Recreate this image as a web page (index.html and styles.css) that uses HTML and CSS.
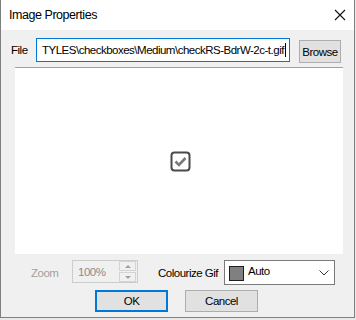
FILE: index.html
```html
<!DOCTYPE html>
<html>
<head>
    <meta name="viewport" content="width=device-width, initial-scale=1.0">
    <title>Image Properties</title>
    <link rel="stylesheet" href="styles.css">
</head>
<body>
<div class="window">
    <div class="titlebar">
        <span class="title">Image Properties</span>
        <svg class="close" width="12" height="12" viewBox="0 0 12 12">
            <path d="M1 1 L11 11 M11 1 L1 11" stroke="#111" stroke-width="1.1" fill="none"/>
        </svg>
    </div>
    <div class="content">
        <div class="file-row">
            <span class="label">File</span>
            <div class="textbox">TYLES\checkboxes\Medium\checkRS-BdrW-2c-t.gif<span class="caret"></span></div>
            <div class="button browse">Browse</div>
        </div>

        <div class="preview">
            <svg width="21" height="21" viewBox="0 0 21 21">
                <rect x="1.5" y="1.5" width="18" height="18" rx="3" ry="3" fill="#fff" stroke="#4a4a4a" stroke-width="2"/>
                <path d="M5.5 10.5 L9 14 L15.5 7" stroke="#7a7a7a" stroke-width="2.6" fill="none"/>
            </svg>
        </div>

        <div class="options-row">
            <span class="label disabled zoom-label">Zoom</span>
            <div class="spinbox">
                <span class="spin-value">100%</span>
                <div class="spin-buttons">
                    <div class="spin-btn"><span class="arrow up"></span></div>
                    <div class="spin-btn"><span class="arrow down"></span></div>
                </div>
            </div>
            <span class="label colourize-label">Colourize Gif</span>
            <div class="dropdown">
                <span class="swatch"></span>
                <span class="dropdown-text">Auto</span>
                <svg class="chevron" width="10" height="6" viewBox="0 0 10 6">
                    <path d="M0.5 0.5 L5 5 L9.5 0.5" stroke="#333" stroke-width="1" fill="none"/>
                </svg>
            </div>
        </div>

        <div class="actions">
            <div class="button default">OK</div>
            <div class="button">Cancel</div>
        </div>
    </div>
</div>
</body>
</html>
```

FILE: styles.css
```css
* {
    margin: 0;
    padding: 0;
    box-sizing: border-box;
}
body {
    width: 356px;
    height: 320px;
    background: #e9e9e9;
    font-family: 'Liberation Sans', Arial, sans-serif;
    font-size: 11.5px;
    letter-spacing: -0.5px;
    color: #000;
}
.window {
    width: 355px;
    height: 318px;
    background: #f0f0f0;
    border: 1px solid #7f7f7f;
    border-top: 0;
    display: flex;
    flex-direction: column;
}
.titlebar {
    height: 30px;
    background: #fff;
    display: flex;
    align-items: center;
    justify-content: space-between;
    padding: 0 8px 0 8px;
}
.title {
    font-size: 12.5px;
    letter-spacing: -0.45px;
    margin-top: -1px;
}
.content {
    flex: 1;
    display: flex;
    flex-direction: column;
}
.label {
    white-space: nowrap;
    flex-shrink: 0;
}
.disabled {
    color: #a0a0a0;
}
.file-row {
    display: flex;
    align-items: center;
    margin-top: 8px;
    height: 24px;
}
.file-row .label {
    width: 35px;
    padding-left: 10px;
}
.textbox {
    width: 254px;
    flex-shrink: 0;
    height: 24px;
    background: #fff;
    border: 1px solid #0078d7;
    line-height: 22px;
    padding-left: 5px;
    white-space: nowrap;
    overflow: hidden;
}
.caret {
    display: inline-block;
    width: 1px;
    height: 14px;
    background: #000;
    vertical-align: -3px;
    margin-left: 1px;
}
.button {
    display: flex;
    align-items: center;
    justify-content: center;
    flex-shrink: 0;
    background: #e1e1e1;
    border: 1px solid #adadad;
}
.browse {
    width: 42px;
    height: 23px;
    margin-left: 9px;
    margin-top: 3px;
}
.preview {
    width: 328px;
    height: 187px;
    margin: 5px 0 0 14px;
    background: #fff;
    border-top: 1px solid #a0a0a0;
    display: flex;
    align-items: center;
    justify-content: center;
    padding: 0 0 0 2px;
}
.options-row {
    display: flex;
    align-items: center;
    margin-top: 6px;
    height: 25px;
}
.zoom-label {
    width: 71px;
    padding-left: 30px;
}
.spinbox {
    width: 66px;
    height: 23px;
    flex-shrink: 0;
    border: 1px solid #cccccc;
    background: #f0f0f0;
    display: flex;
    align-items: center;
    margin-top: -2px;
}
.spin-value {
    flex: 1;
    color: #8a8a8a;
    padding-left: 5px;
}
.spin-buttons {
    width: 17px;
    height: 21px;
    display: flex;
    flex-direction: column;
    gap: 1px;
    margin-right: 1px;
}
.spin-btn {
    flex: 1;
    background: #f0f0f0;
    border: 1px solid #d4d4d4;
    display: flex;
    align-items: center;
    justify-content: center;
}
.arrow {
    width: 0;
    height: 0;
    border-left: 3px solid transparent;
    border-right: 3px solid transparent;
}
.arrow.up {
    border-bottom: 3px solid #a0a0a0;
}
.arrow.down {
    border-top: 3px solid #a0a0a0;
}
.colourize-label {
    margin-left: 20px;
    width: 66px;
}
.dropdown {
    width: 111px;
    height: 25px;
    flex-shrink: 0;
    background: #fff;
    border: 1px solid #7a7a7a;
    display: flex;
    align-items: center;
    padding: 0 4px 0 4px;
}
.swatch {
    width: 15px;
    height: 15px;
    background: #808080;
    border: 1px solid #1e1e1e;
    margin-top: 1px;
}
.dropdown-text {
    flex: 1;
    padding-left: 4px;
    margin-top: -3px;
}
.chevron {
    margin-right: 1px;
}
.actions {
    display: flex;
    gap: 17px;
    margin: 5px 0 0 94px;
}
.actions .button {
    width: 73px;
    height: 22px;
}
.actions .button.default {
    border: 2px solid #0078d7;
}
```
